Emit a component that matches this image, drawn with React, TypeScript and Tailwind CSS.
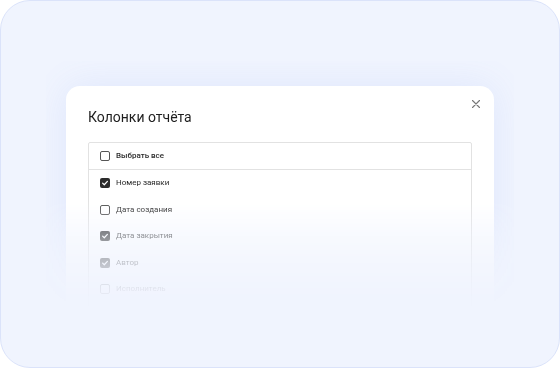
import React from "react";

type Item = { label: string; checked: boolean };

const items: Item[] = [
  { label: "Номер заявки", checked: true },
  { label: "Дата создания", checked: false },
  { label: "Дата закрытия", checked: true },
  { label: "Автор", checked: true },
  { label: "Исполнитель", checked: false },
  { label: "Статус", checked: true },
];

function Box({ checked }: { checked: boolean }) {
  if (checked) {
    return (
      <span className="flex h-[10px] w-[10px] shrink-0 items-center justify-center rounded-[2px] bg-[#2b2b2b]">
        <svg width="8" height="8" viewBox="0 0 10 10" fill="none">
          <path d="M2 5.2L4.1 7.2L8 2.9" stroke="white" strokeWidth="1.5" strokeLinecap="round" strokeLinejoin="round" />
        </svg>
      </span>
    );
  }
  return <span className="h-[10px] w-[10px] shrink-0 rounded-[2px] border-[1.3px] border-[#555]" />;
}

export default function App() {
  return (
    <div className="h-[368px] w-[560px] bg-white" style={{ fontFamily: "Roboto, 'Noto Sans', sans-serif" }}>
      <div className="flex h-[368px] w-[560px] justify-center overflow-hidden rounded-[30px] border border-[#dbe3fa] bg-[#f0f4fe] pt-[60px]">
        <div className="h-[260px] w-[468px] px-[20px] pt-[25px] [mask-image:linear-gradient(to_bottom,black_0px,black_140px,rgba(0,0,0,0.5)_175px,rgba(0,0,0,0.25)_202px,rgba(0,0,0,0.08)_228px,transparent_250px)]">
          <div className="relative h-[240px] w-[428px] overflow-hidden rounded-[14px] bg-white shadow-[0_0_36px_rgba(110,140,235,0.12)]">
            <svg className="absolute right-[14px] top-[14px]" width="8" height="8" viewBox="0 0 8 8" fill="none">
              <path d="M0.5 0.5L7.5 7.5M7.5 0.5L0.5 7.5" stroke="#777" strokeWidth="1.1" strokeLinecap="round" />
            </svg>
            <div className="px-[22px] pt-[21px]">
              <h2 className="text-[14px] leading-[20px] font-normal text-[#1e1e1e]">Колонки отчёта</h2>
              <div className="mt-[15px] rounded-t-[2px] border border-[#e2e2e2]">
                <div className="flex h-[27px] items-center gap-[6px] border-b border-[#e2e2e2] pl-[11px]">
                  <Box checked={false} />
                  <span className="text-[8px] font-medium text-[#2a2a2a]">Выбрать все</span>
                </div>
                {items.map((it) => (
                  <div key={it.label} className="flex h-[26.5px] items-center gap-[6px] pl-[11px]">
                    <Box checked={it.checked} />
                    <span className="text-[8px] text-[#2a2a2a]">{it.label}</span>
                  </div>
                ))}
              </div>
            </div>
          </div>
        </div>
      </div>
    </div>
  );
}
